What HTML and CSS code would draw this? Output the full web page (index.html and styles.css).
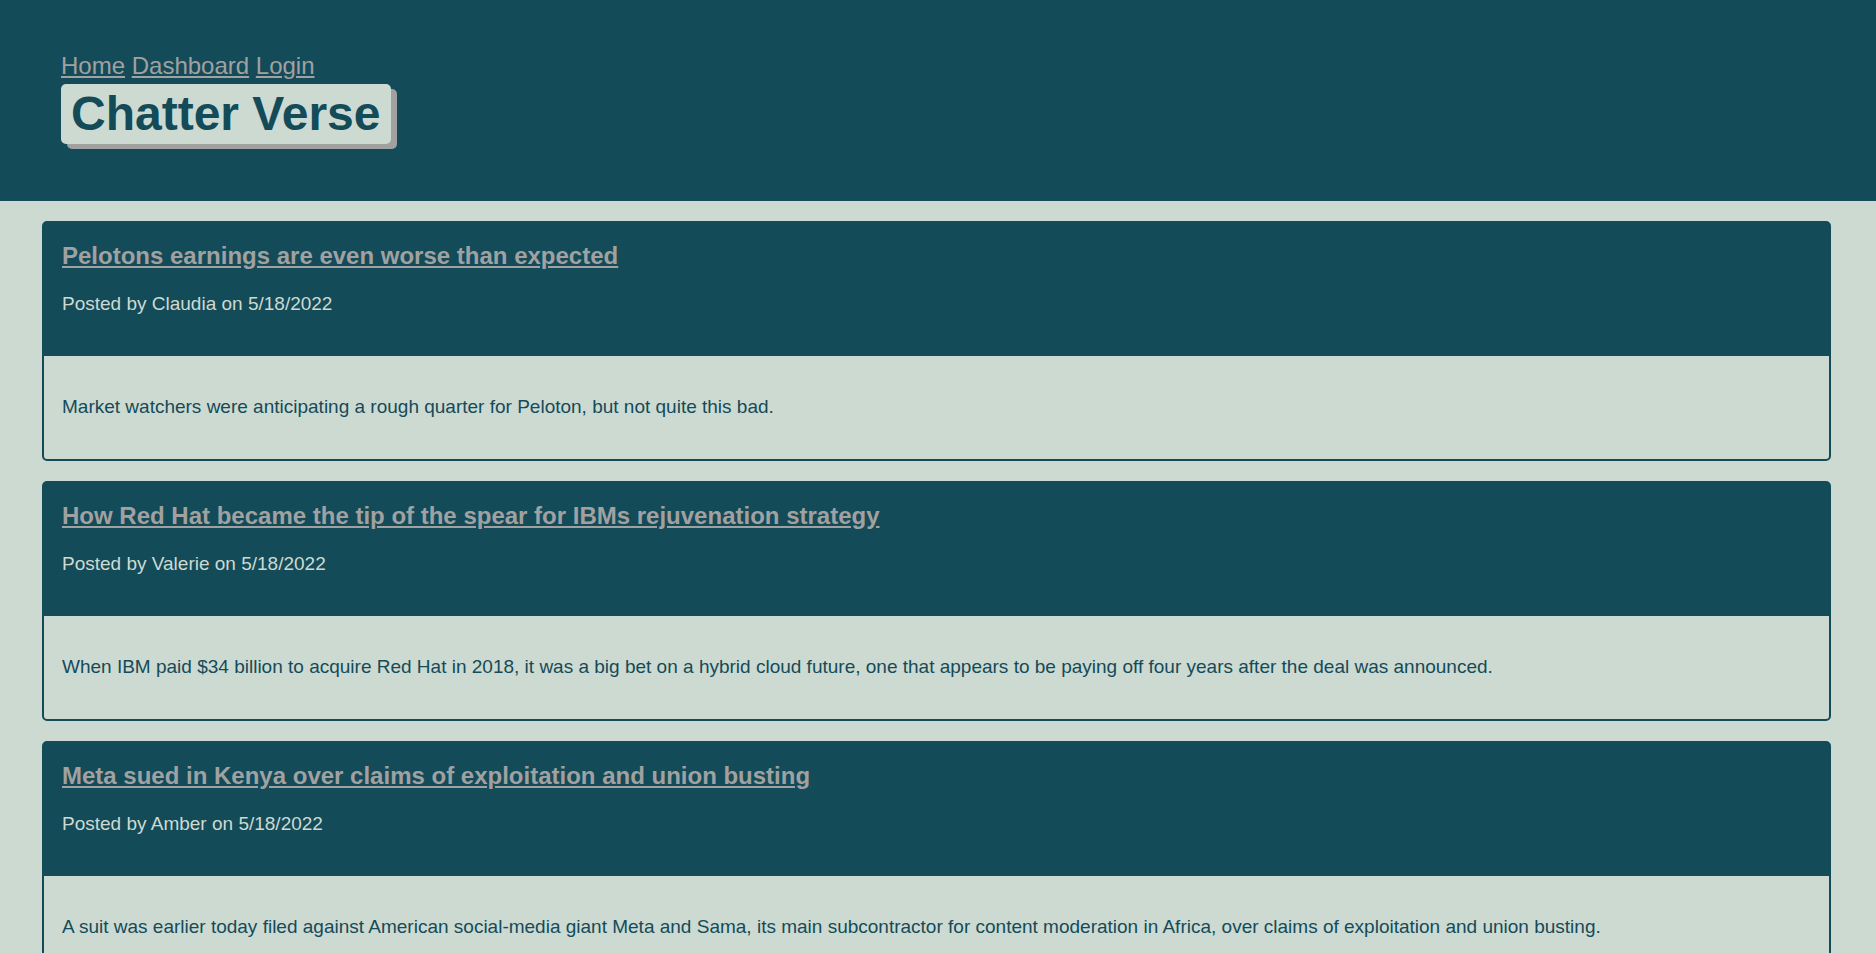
FILE: index.html
```html
<!DOCTYPE html>
<html lang="en">
<head>
<meta charset="utf-8">
<title>Chatter Verse</title>
<link rel="stylesheet" href="styles.css">
</head>
<body>
<header class="hero">
<nav class="nav"><a href="#">Home</a> <a href="#">Dashboard</a> <a href="#">Login</a></nav>
<h1 class="brand">Chatter Verse</h1>
</header>
<main class="posts">
<article class="card">
<header class="card-header"><h2 class="card-title"><a href="#">Pelotons earnings are even worse than expected</a></h2><p class="card-meta">Posted by Claudia on 5/18/2022</p></header>
<p class="card-body">Market watchers were anticipating a rough quarter for Peloton, but not quite this bad.</p>
</article>
<article class="card">
<header class="card-header"><h2 class="card-title"><a href="#">How Red Hat became the tip of the spear for IBMs rejuvenation strategy</a></h2><p class="card-meta">Posted by Valerie on 5/18/2022</p></header>
<p class="card-body">When IBM paid $34 billion to acquire Red Hat in 2018, it was a big bet on a hybrid cloud future, one that appears to be paying off four years after the deal was announced.</p>
</article>
<article class="card">
<header class="card-header"><h2 class="card-title"><a href="#">Meta sued in Kenya over claims of exploitation and union busting</a></h2><p class="card-meta">Posted by Amber on 5/18/2022</p></header>
<p class="card-body">A suit was earlier today filed against American social-media giant Meta and Sama, its main subcontractor for content moderation in Africa, over claims of exploitation and union busting.</p>
</article>
</main>
</body>
</html>
```

FILE: styles.css
```css
* { box-sizing: border-box; }
body {
  margin: 0;
  background: #cddad1;
  color: #144b59;
  font-family: "Liberation Sans", Arial, sans-serif;
  font-size: 19px;
  line-height: 25px;
}
a { color: #a1a1a1; }
.hero {
  background: #144b59;
  padding: 48px 61px 57px;
}
.nav { font-size: 24px; line-height: 36px; }
.brand {
  width: fit-content;
  margin: 0;
  padding: 0 10px;
  border-radius: 5px;
  background: #cddad1;
  box-shadow: 6px 5px 0 #a1a1a1;
  font-size: 48px;
  line-height: 60px;
}
.posts {
  display: flex;
  flex-direction: column;
  gap: 20px;
  padding: 20px 45px 20px 42px;
}
.card {
  border: 2px solid #144b59;
  border-radius: 5px;
}
.card-header {
  background: #144b59;
  color: #cddad1;
  padding: 18px 18px 40px;
}
.card-title { margin: 0 0 20px; font-size: 24px; line-height: 30px; }
.card-meta { margin: 0; }
.card-body { margin: 0; padding: 38px 18px 40px; }
```
